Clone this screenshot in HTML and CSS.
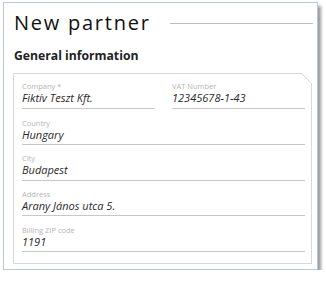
FILE: index.html
```html
<!DOCTYPE html>
<html>
<head>
<meta charset="utf-8">
<link rel="stylesheet" href="styles.css">
</head>
<body>
<div class="card">
  <div class="title-row">
    <h1 class="title">New partner</h1>
    <div class="title-line"></div>
  </div>
  <h2 class="section">General information</h2>
  <div class="box">
    <div class="row two">
      <div class="field">
        <div class="label">Company *</div>
        <div class="value">Fiktív Teszt Kft.</div>
      </div>
      <div class="field">
        <div class="label">VAT Number</div>
        <div class="value">12345678-1-43</div>
      </div>
    </div>
    <div class="field">
      <div class="label">Country</div>
      <div class="value">Hungary</div>
    </div>
    <div class="field">
      <div class="label">City</div>
      <div class="value">Budapest</div>
    </div>
    <div class="field">
      <div class="label">Address</div>
      <div class="value">Arany János utca 5.</div>
    </div>
    <div class="field">
      <div class="label">Billing ZIP code</div>
      <div class="value">1191</div>
    </div>
  </div>
</div>
</body>
</html>
```

FILE: styles.css
```css
html, body {
  margin: 0;
  padding: 0;
  background: #ffffff;
}
body {
  padding: 2px 0 0 3px;
  font-family: "Open Sans", "Liberation Sans", sans-serif;
}
.card {
  width: 315px;
  height: 268px;
  box-sizing: border-box;
  border: 1px solid #b9c6dd;
  background: #fff;
  box-shadow: 3px 4px 3px rgba(0, 0, 0, 0.4);
  padding: 7px 4px 0 10px;
}
.title-row {
  display: flex;
  align-items: center;
  height: 26px;
}
.title {
  margin: 0;
  font-size: 20px;
  font-weight: 500;
  letter-spacing: 1.75px;
  color: #111;
  line-height: 26px;
}
.title-line {
  flex: 1;
  height: 1px;
  background: #bdbdbd;
  margin-left: 19px;
  margin-top: 0;
}
.section {
  margin: 12px 0 0 0;
  font-size: 12.2px;
  font-weight: 700;
  color: #222;
  line-height: 16px;
}
.box {
  position: relative;
  margin: 9px 0 0 -1px;
  width: 299px;
  height: 191px;
  box-sizing: border-box;
  border: 1px solid #d8d8d8;
  padding: 0 6px 0 8px;
}
.box::after {
  content: "";
  position: absolute;
  top: -1px;
  right: -1px;
  width: 11px;
  height: 11px;
  background: linear-gradient(to bottom left, #fff 0, #fff calc(50% - 0.6px), #d8d8d8 calc(50% - 0.6px), #d8d8d8 calc(50% + 0.6px), transparent calc(50% + 0.6px));
}
.row.two {
  display: grid;
  grid-template-columns: 1fr 1fr;
  column-gap: 17px;
}
.field {
  height: 35.75px;
  box-sizing: border-box;
  border-bottom: 1px solid #c8c8c8;
  padding-top: 9.5px;
}
.row.two .field {
  height: 35px;
  padding-top: 7.5px;
}
.label {
  font-size: 7.5px;
  color: #b5b5b5;
  line-height: 8px;
}
.value {
  font-size: 11px;
  font-style: italic;
  color: #2a2a2a;
  line-height: 15px;
}
```
